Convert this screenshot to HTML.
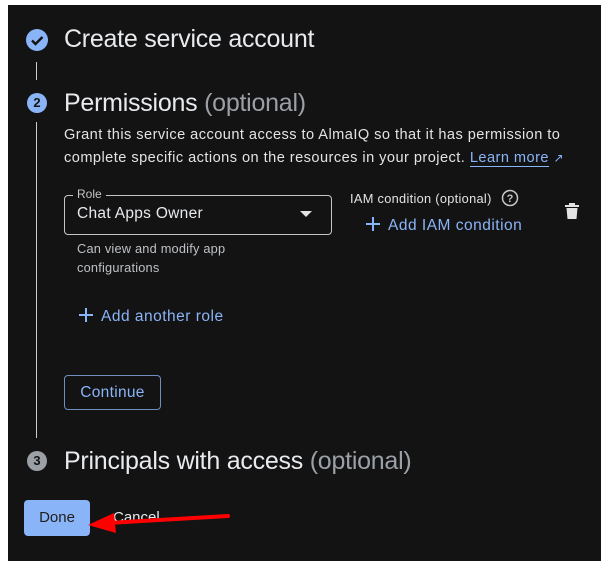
<!DOCTYPE html>
<html><head><meta charset="utf-8"><style>
*{margin:0;padding:0;box-sizing:border-box}
body{width:609px;height:565px;background:#fff;position:relative;overflow:hidden;font-family:"Liberation Sans",sans-serif}
#d{position:absolute;left:8px;top:5px;width:593px;height:556px;background:#131313}
.a{position:absolute;white-space:nowrap}
.h{font-size:25px;color:#e8eaed;letter-spacing:-0.25px}
.o{color:#9aa0a6}
.p{font-size:14.6px;color:#e3e3e3;line-height:23px;letter-spacing:0.45px}
.b{color:#8ab4f8}
.c{position:absolute;border-radius:50%}
.pl{display:inline-block;width:14px;height:14px;position:relative;margin-right:8px;top:1px}
.pl:before{content:"";position:absolute;left:6px;top:0;width:2px;height:14px;background:#8ab4f8}
.pl:after{content:"";position:absolute;left:0;top:6px;width:14px;height:2px;background:#8ab4f8}
</style></head><body>
<div id="d"></div>
<div class="c" style="left:26px;top:29px;width:22px;height:22px;background:#8ab4f8"></div>
<svg class="a" style="left:26px;top:29px" width="22" height="22"><path d="M6 11.5l3.5 3.5 7-7" stroke="#131313" stroke-width="2.4" fill="none"/></svg>
<div class="a h" style="left:64px;top:25px">Create service account</div>
<div class="a" style="left:36px;top:62px;width:1px;height:18px;background:#ccc"></div>
<div class="c" style="left:27px;top:93px;width:20px;height:20px;background:#8ab4f8;color:#131313;font-size:13px;font-weight:bold;text-align:center;line-height:20px">2</div>
<div class="a h" style="left:64px;top:89px">Permissions <span class="o">(optional)</span></div>
<div class="a" style="left:36px;top:122px;width:1px;height:316px;background:#ccc"></div>
<div class="a p" style="left:64px;top:124px">Grant this service account access to AlmaIQ so that it has permission to<br>complete specific actions on the resources in your project. <span class="b" style="border-bottom:1px solid #8ab4f8">Learn more</span> <span class="b" style="font-size:12px">↗</span></div>
<div class="a" style="left:64px;top:195px;width:268px;height:40px;border:1px solid #c4c7c5;border-radius:4px"></div>
<div class="a" style="left:73px;top:187px;background:#131313;padding:0 4px;font-size:12px;color:#c4c7c5">Role</div>
<div class="a" style="left:77px;top:205px;font-size:15.5px;color:#e8eaed;letter-spacing:0.3px">Chat Apps Owner</div>
<svg class="a" style="left:300px;top:211px" width="12" height="7"><path d="M0 0h12L6 6z" fill="#e3e3e3"/></svg>
<div class="a" style="left:77px;top:239px;font-size:12.8px;color:#bdc1c6;line-height:19px;letter-spacing:0.2px">Can view and modify app<br>configurations</div>
<div class="a b" style="left:79px;top:307px;font-size:15.5px;letter-spacing:0.5px"><span class="pl"></span>Add another role</div>
<div class="a" style="left:64px;top:375px;width:97px;height:35px;border:1px solid #6f8fbf;border-radius:4px;color:#8ab4f8;font-size:15.5px;text-align:center;line-height:33px;letter-spacing:0.3px">Continue</div>
<div class="a" style="left:350px;top:191px;font-size:12.8px;color:#e3e3e3;letter-spacing:0.3px">IAM condition (optional)</div>
<svg class="a" style="left:501px;top:189px" width="18" height="18"><circle cx="9" cy="9" r="7.5" stroke="#c4c7c5" stroke-width="1.5" fill="none"/><text x="9" y="13" font-size="11" font-family="Liberation Sans" fill="#c4c7c5" text-anchor="middle" font-weight="bold">?</text></svg>
<div class="a b" style="left:366px;top:216px;font-size:15.5px;letter-spacing:0.5px"><span class="pl"></span>Add IAM condition</div>
<svg class="a" style="left:565px;top:203px" width="14" height="16"><rect x="0" y="2" width="14" height="2" fill="#e3e3e3"/><rect x="4" y="0" width="6" height="3" fill="#e3e3e3"/><path d="M1.5 5h11l-1 11h-9z" fill="#e3e3e3"/></svg>
<div class="c" style="left:27px;top:451px;width:20px;height:20px;background:#9aa0a6;color:#131313;font-size:13px;font-weight:bold;text-align:center;line-height:20px">3</div>
<div class="a h" style="left:64px;top:447px">Principals with access <span class="o">(optional)</span></div>
<div class="a" style="left:24px;top:500px;width:66px;height:36px;background:#8ab4f8;border-radius:4px;color:#1f1f1f;font-size:15px;text-align:center;line-height:36px">Done</div>
<div class="a" style="left:113px;top:509px;font-size:15px;color:#e8eaed">Cancel</div>
<svg class="a" style="left:0;top:0" width="609" height="565"><path d="M228 516L108 523" stroke="#f00" stroke-width="4" stroke-linecap="round"/><path d="M88 525L114 513L116 533z" fill="#f00"/></svg>
</body></html>
